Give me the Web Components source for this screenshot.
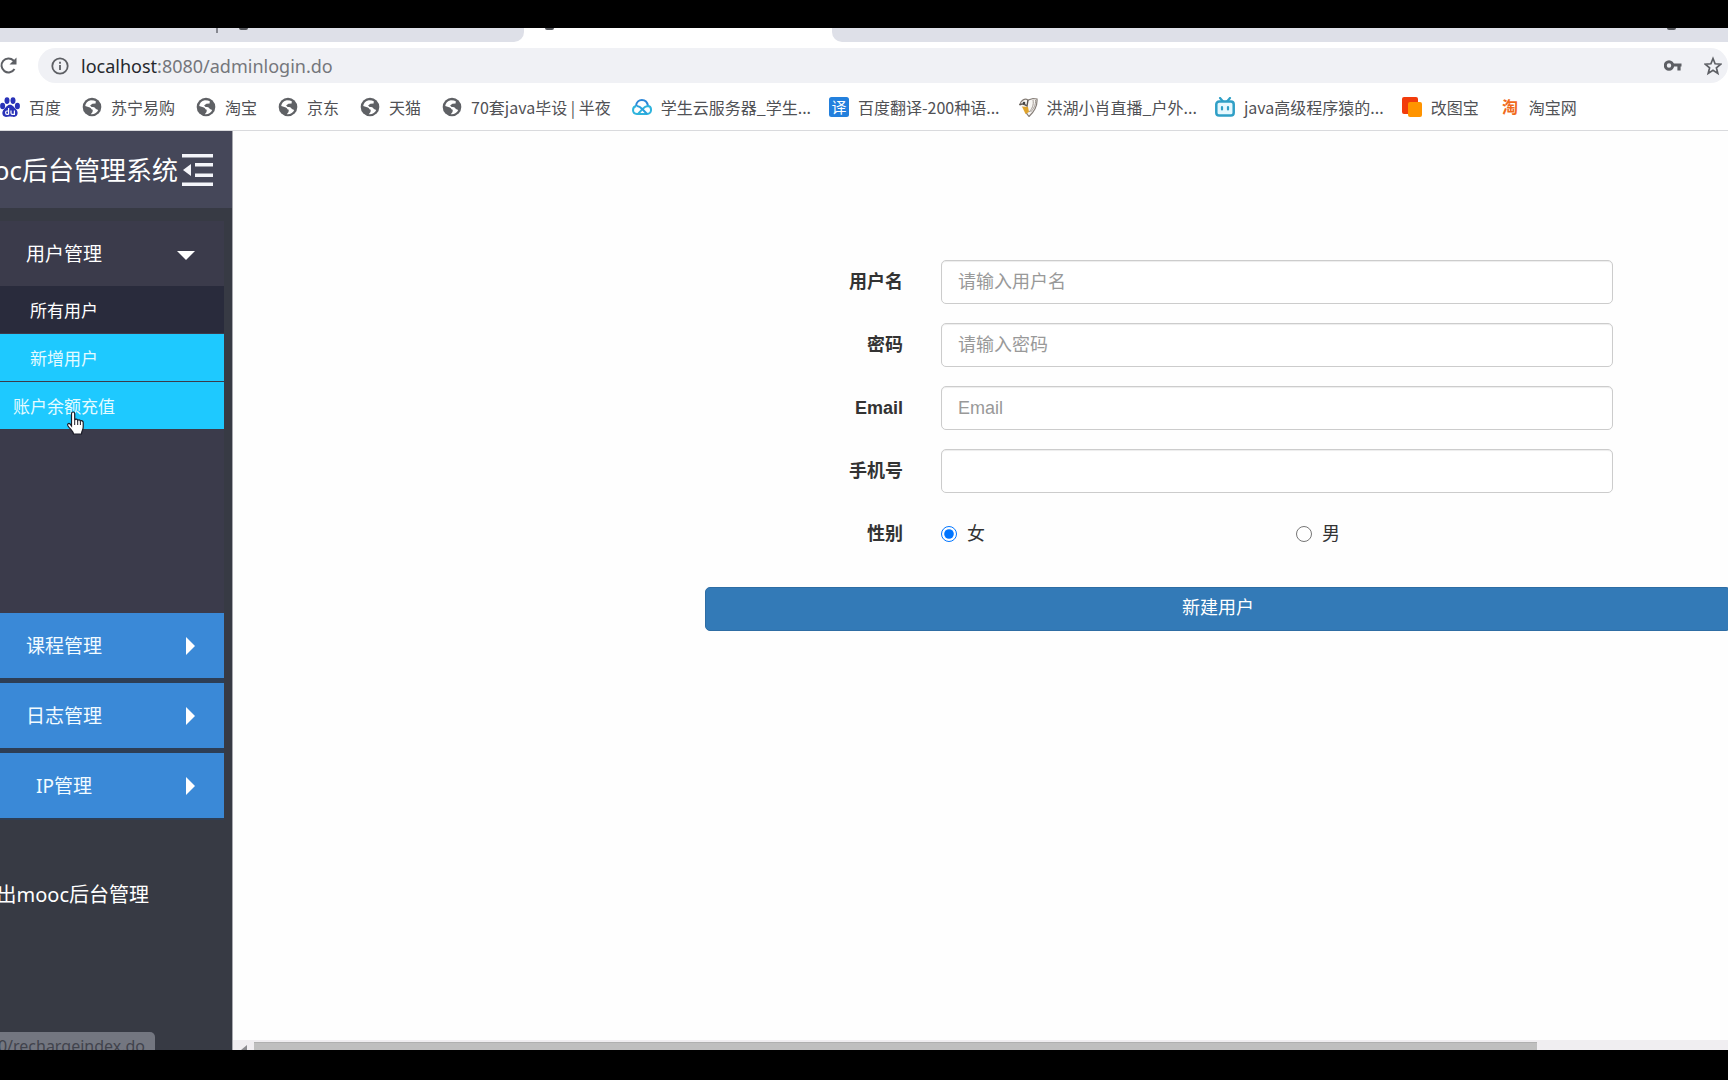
<!DOCTYPE html>
<html lang="zh-CN">
<head>
<meta charset="utf-8">
<title>mooc后台管理系统</title>
<style>
html,body{margin:0;height:100%}
body{background:#000;overflow:hidden;font-family:"Noto Sans","Noto Sans CJK SC",sans-serif}
</style>
</head>
<body>
<app-window></app-window>
<script>
const define = (name, html) => customElements.define(name, class extends HTMLElement {
  connectedCallback() {
    if (this.shadowRoot) return;
    const t = document.createElement('template');
    t.innerHTML = typeof html === 'function' ? html(this) : html;
    this.attachShadow({ mode: 'open' }).append(t.content.cloneNode(true));
  }
});

const icons = {
  baidu: `<g fill="#2932b8"><ellipse cx="2.600" cy="9" rx="2.500" ry="3.200"/><ellipse cx="7" cy="3.600" rx="2.500" ry="3.400"/><ellipse cx="13" cy="3.600" rx="2.500" ry="3.400"/><ellipse cx="17.400" cy="9" rx="2.500" ry="3.200"/><path d="M10 7.800c-3 0-3.700 2.500-5.700 4.200-3 2.500-2.500 7.700 1.700 7.900 1.800 0 2.500-.4 4-.4s2.200.4 4 .4c4.200-.2 4.700-5.400 1.700-7.900C13.700 10.300 13 7.800 10 7.800z"/></g><path d="M8.600 11v6.500M8.600 14h-1.600q-1.400 0-1.400 1.700t1.400 1.700h1.600M11 13.500v2.400q0 1.500 1.300 1.500h2.100v-4" fill="none" stroke="#fff" stroke-width="1.200"/>`,
  globe: `<circle cx="10" cy="10" r="9.300" fill="#5f6165"/><path d="M8.800 3.300C5.500 4 3.600 6.300 3.200 9l4.600 1.400c1.500.5 1.200 2.200 3 2.300l-.3 2.200-1.700 2.300c3.200.5 6.300-1.400 7.400-4.200l-2.300-1c-.8-1.700-2.400-1.800-4.300-1.900l-1.500-1.500 2.300-1.900 3.200-.2.200-2.200-2-.8z" fill="#fff"/>`,
  cloud: `<g fill="none" stroke-width="2" stroke-linejoin="round"><path d="M4 9c.8-8 10.800-8 12 0" stroke="#2b86d8"/><path d="M4.500 9C-.2 9.800-.2 16.800 5 17h10c5.500-.5 5-7.700.8-8-3.200 0-4.300 2-6.300 4.200L6 17" stroke="#2fb4dd"/><path d="M5 9c2.600 0 4 1.600 5.500 3.300L15 17" stroke="#2b9fdd"/></g>`,
  translate: `<rect width="20" height="20" rx="2.500" fill="#2380dd"/><text x="10" y="15.500" text-anchor="middle" font-size="15" fill="#fff">译</text>`,
  bird: `<path d="M1.500 8C3 3 7 1 10 3l5-1.500 4 .5c.5 6-1 11-8 17.500-1-1.500-2.500-2.500-3-4.500" fill="#f7f5f2" stroke="#857d77" stroke-width="1.200"/><path d="M1.500 8c2-1.500 5-1 7.500 1l1-6" fill="none" stroke="#5d5753" stroke-width="1.400"/><path d="m4 9.500 6 .5 1 5-3.500 2z" fill="#dfa32c"/><path d="M15 3c1 5-1 9-4 12M17.500 3c.5 5-2 9-5 12" stroke="#a39b95" fill="none"/><circle cx="6" cy="6" r="1.300" fill="#444"/>`,
  bili: `<path d="m5 1 3 3.400M15 1l-3 3.400" stroke="#2f9fc6" stroke-width="2.200" stroke-linecap="round"/><rect x="1.300" y="4.500" width="17.400" height="14" rx="2.800" fill="#e6f8fe" stroke="#2f9fc6" stroke-width="2.500"/><path d="M7 10v2.500M13 10v2.500" stroke="#2f9fc6" stroke-width="2.200" stroke-linecap="round"/>`,
  copy: `<rect x="0" y="0" width="16" height="17" rx="2" fill="#f23c0c"/><rect x="6" y="5" width="14" height="15" rx="2" fill="#ff9400"/>`,
  tao: `<text x="10" y="16" text-anchor="middle" font-size="16" font-weight="700" fill="#f06a1c">淘</text>`
};

define('book-mark', el => `<style>
:host{display:block;flex:none}
:host([cut]){margin-right:-3px}
a{display:flex;align-items:center;gap:9px;color:#505155;text-decoration:none;font:16px/24px "Noto Sans CJK SC",sans-serif;white-space:nowrap}
svg{width:20px;height:20px;flex:none}
</style><a href="#"><svg viewBox="0 0 20 20">${icons[el.getAttribute('icon')]}</svg><slot></slot></a>`);

define('browser-bar', `<style>
:host{display:block;background:#fff;border-bottom:1px solid #d9dadd}
.tabs{display:flex;height:20px;align-items:flex-start}
.tab{height:14px;background:#dee0e8;display:flex;align-items:flex-start;box-sizing:border-box}
.one{width:524px;border-radius:0 0 10px 0;padding-left:216px;gap:21px}
.cur{width:308px;background:none;padding-left:21px}
.rest{flex:1;border-radius:0 0 0 10px;justify-content:flex-end;padding-right:52px}
.sep{width:2px;height:5px;background:#868890}
.dot{width:9px;height:2px;border-radius:0 0 5px 5px;background:#55575c}
.nav{display:flex;gap:20px;align-items:center;height:35px}
.nav button{border:0;background:none;padding:0;width:18px;height:20px;display:block}
.omni{flex:1;display:flex;align-items:center;background:#f0f1f5;height:35px;border-radius:18px;padding:0 6px 0 13px;gap:12px;box-sizing:border-box}
.url{flex:1;font-size:18px;line-height:28px;color:#75777c;white-space:nowrap}
.url b{font-weight:400;color:#26282c}
.tools{display:flex;gap:22px}
svg{display:block}
nav{display:flex;gap:21px;height:47px;align-items:center;overflow:hidden;padding-top:1px;box-sizing:border-box}
</style>
<div class="tabs"><div class="tab one"><i class="sep"></i><i class="dot"></i></div><div class="tab cur"><i class="dot"></i></div><div class="tab rest"><i class="dot"></i></div></div>
<div class="nav"><button aria-label="重新加载"><svg width="18" height="20" viewBox="0 0 18 20" fill="none" stroke="#5d5f64" stroke-width="2"><path d="M14.500 13A7 7 0 1 1 13.500 4.500l2 2"/><path d="M16.500 1.500v7h-7z" fill="#5d5f64" stroke="none"/></svg></button>
<div class="omni"><svg width="18" height="18" viewBox="0 0 18 18" fill="none" stroke="#5d5f64" stroke-width="1.800"><circle cx="9" cy="9" r="7.700"/><path d="M9 8v5M9 4.800v1.900"/></svg>
<div class="url"><b>localhost</b>:8080/adminlogin.do</div>
<div class="tools"><button aria-label="密码"><svg width="18" height="20" viewBox="0 0 18 20" fill="none" stroke="#5d5f64"><circle cx="5" cy="9.500" r="3.700" stroke-width="3"/><path d="M8 9h9.500M15 10v4.500" stroke-width="3.200"/></svg></button>
<button aria-label="收藏"><svg width="18" height="20" viewBox="0 0 18 20" fill="none" stroke="#5d5f64" stroke-width="1.700"><path d="m9 2.500 2.100 5.300 5.700.4-4.400 3.600 1.400 5.600L9 14.300l-4.800 3.100 1.400-5.600L1.200 8.200l5.700-.4z"/></svg></button></div></div></div>
<nav>
<book-mark icon="baidu">百度</book-mark>
<book-mark icon="globe">苏宁易购</book-mark>
<book-mark icon="globe">淘宝</book-mark>
<book-mark icon="globe">京东</book-mark>
<book-mark icon="globe">天猫</book-mark>
<book-mark icon="globe">70套java毕设 | 半夜</book-mark>
<book-mark cut icon="cloud">学生云服务器_学生...</book-mark>
<book-mark cut icon="translate">百度翻译-200种语...</book-mark>
<book-mark cut icon="bird">洪湖小肖直播_户外...</book-mark>
<book-mark cut icon="bili">java高级程序猿的...</book-mark>
<book-mark icon="copy">改图宝</book-mark>
<book-mark icon="tao">淘宝网</book-mark>
</nav>`);

define('menu-group', el => `<style>
:host{display:block}
button{display:grid;grid-template-columns:128px 1fr;align-items:center;width:100%;height:65px;border:0;padding:0 29px 0 0;background:#3a89d7;color:#f2fbff;font:19px/28px "Noto Sans","Noto Sans CJK SC",sans-serif;text-align:center}
svg{justify-self:end}
:host([open]) button{background:none;color:#fff}
.sub{display:flex;flex-direction:column;gap:1px}
</style><button aria-expanded="${el.hasAttribute('open')}"><span>${el.getAttribute('label')}</span>${el.hasAttribute('open')
 ? '<svg width="18" height="14" viewBox="0 -4 18 14"><path d="M0 0h18L9 9z" fill="#fff"/></svg>'
 : '<svg width="9" height="18" viewBox="0 0 9 18"><path d="M0 0v18l9-9z" fill="#fff"/></svg>'}</button>
<div class="sub"><slot></slot></div>`);

define('menu-link', `<style>
:host{display:block}
a{display:block;height:47px;background:#292b3c;color:#fff;font-size:17px;line-height:49px;text-decoration:none;padding-right:96px;text-align:center;white-space:nowrap}
:host([active]) a{background:#1ec9ff;color:#e4fbff}
</style><a href="#"><slot></slot></a>`);

define('side-bar', `<style>
:host{display:flex;flex-direction:column;width:233px;background:#373a44;overflow:hidden;border-right:1px solid #a9aab0;box-sizing:border-box}
header{display:flex;justify-content:flex-end;align-items:center;gap:4px;height:77px;padding-right:19px;background:#454759;color:#fff}
h1{margin:0;font-size:26px;line-height:36px;font-weight:400;white-space:nowrap}
header button{border:0;background:none;padding:0;flex:none}
svg{display:block}
.menu{padding-top:13px;width:224px}
.open{background:#3b3b4b;min-height:392px}
.exit{display:flex;justify-content:flex-end;width:149px;margin-top:61px;color:#fff;font-size:20px;line-height:28px;text-decoration:none;white-space:nowrap}
.status{display:flex;justify-content:flex-end;margin-top:auto;width:155px;height:18px;background:#737680;border-radius:0 5px 0 0;color:#41434c;font-size:16px;line-height:28px;white-space:nowrap;padding-right:10px;box-sizing:border-box;overflow:hidden}
.rest{display:flex;flex-direction:column;gap:5px;background:#2d3e55;padding-bottom:2px}
</style>
<header><h1>mooc后台管理系统</h1><button aria-label="收起菜单"><svg width="31" height="32" viewBox="0 0 31 32" fill="#f4f5fa"><path d="M0 0h31v3.500H0zM13 9h18v3.500H13zM13 19.500h18V23H13zM0 28.500h31V32H0zM1 16l8-6v12z"/></svg></button></header>
<div class="menu"><div class="open"><menu-group open label="用户管理"><menu-link>所有用户</menu-link><menu-link active>新增用户</menu-link><menu-link active>账户余额充值</menu-link></menu-group></div>
<div class="rest"><menu-group label="课程管理"></menu-group><menu-group label="日志管理"></menu-group><menu-group label="IP管理"></menu-group></div></div>
<a class="exit" href="#">退出mooc后台管理</a>
<div class="status"><span>localhost:8080/rechargeindex.do</span></div>`);

define('form-row', el => {
  const type = el.getAttribute('type'), label = el.getAttribute('label');
  const field = type === 'radio'
    ? `<div class="radios" role="radiogroup" aria-label="${label}"><label><input type="radio" name="sex" checked>女</label><label><input type="radio" name="sex">男</label></div>`
    : `<input class="text" id="f" type="${type}" placeholder="${el.getAttribute('placeholder') || ''}">`;
  return `<style>
:host{display:grid;grid-template-columns:198px 1fr;column-gap:38px;height:44px;padding-right:118px;font-family:"Liberation Sans","Noto Sans CJK SC",sans-serif;font-size:18px;color:#333}
.name{font-weight:700;line-height:44px;text-align:right}
.text{width:100%;height:44px;box-sizing:border-box;border:1px solid #ccc;border-radius:5px;padding:0 16px;font:inherit;background:#fff;box-shadow:inset 0 1px 1px rgba(0,0,0,.075);outline:0}
.text::placeholder{color:#999;opacity:1}
.radios{display:grid;grid-template-columns:1fr 1fr;column-gap:38px}
.radios label{display:flex;align-items:center;gap:10px;line-height:44px}
.radios input{width:16px;height:16px;margin:0}
</style>${type === 'radio' ? `<span class="name">${label}</span>` : `<label class="name" for="f">${label}</label>`}${field}`;
});

define('user-form', `<style>
:host{display:block}
form{display:flex;flex-direction:column;gap:19px;margin:0}
button{height:44px;margin-top:12px;border:1px solid #2e6da4;border-radius:5px;background:#337ab7;color:#fff;font:18px/26px "Liberation Sans","Noto Sans CJK SC",sans-serif;padding:0 0 2px}
</style><form>
<form-row type="text" label="用户名" placeholder="请输入用户名"></form-row>
<form-row type="password" label="密码" placeholder="请输入密码"></form-row>
<form-row type="email" label="Email" placeholder="Email"></form-row>
<form-row type="tel" label="手机号"></form-row>
<form-row type="radio" label="性别"></form-row>
<button type="button">新建用户</button></form>`);

define('scroll-track', `<style>
:host{display:flex;height:10px;background:#f0eef1;overflow:hidden;padding-right:191px}
svg{flex:none;margin:5px 5px 0 8px}
i{flex:1;margin-top:2px;background:#bfbfbf;border-top:1px solid #b0b0b0}
</style><svg width="8" height="10" viewBox="0 0 8 10"><path d="M6 0v10L0 5z" fill="#8b8b8f"/></svg><i></i>`);

define('app-window', `<style>
:host{display:flex;flex-direction:column;height:100vh;box-sizing:border-box;padding:28px 0 30px;background:#000}
.body{flex:1;display:flex;min-height:0;position:relative}
side-bar{flex:none}
main{flex:1;display:flex;flex-direction:column;background:#fefefe;overflow:hidden;min-width:0}
user-form{margin:129px -3px 0 472px}
scroll-track{margin-top:auto}
.cursor{position:absolute;left:66px;top:280px}
</style>
<browser-bar></browser-bar>
<div class="body"><side-bar></side-bar><main><user-form></user-form><scroll-track></scroll-track></main>
<svg class="cursor" width="19" height="24" viewBox="0 0 19 24"><path d="M5.500 15V2.800c0-2.400 3.200-2.400 3.200 0V9c.5-1.300 2.800-1.100 3 .4.700-1 2.500-.7 2.700.7 1-.8 2.800-.2 2.800 1.400V16c0 3-1.700 4-1.700 7H7.500c0-2.500-3-4.500-5.500-8-1.200-2 .8-3.200 2-2z" fill="#fff" stroke="#1c1c28" stroke-width="1.200"/><path d="M8.700 9v5M11.700 10v4M14.400 10.500V14" stroke="#1c1c28"/></svg></div>`);
</script>
</body>
</html>
